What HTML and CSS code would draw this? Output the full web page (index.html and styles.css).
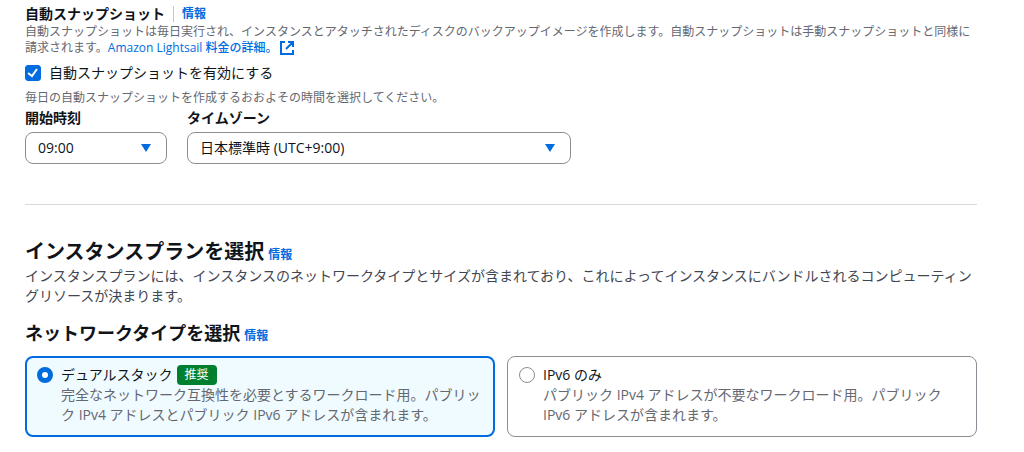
FILE: index.html
```
<!DOCTYPE html>
<html lang="ja">
<head>
    <meta charset="UTF-8">
    <meta name="viewport" content="width=device-width, initial-scale=1.0">
    <title>インスタンスの作成</title>
    <link rel="stylesheet" href="styles.css">
</head>
<body>
    <main class="page">
        <section class="snapshot">
            <div class="snapshot-header">
                <h3 class="snapshot-title">自動スナップショット</h3>
                <a class="info-link divided" href="#">情報</a>
            </div>
            <p class="hint">自動スナップショットは毎日実行され、インスタンスとアタッチされたディスクのバックアップイメージを作成します。自動スナップショットは手動スナップショットと同様に請求されます。<a class="pricing-link" href="#">Amazon Lightsail 料金の詳細。<svg class="external-icon" viewBox="0 0 16 16" aria-hidden="true"><path d="M6 2H2v12h12v-4M9 2h5v5M14 2 7 9"/></svg></a></p>

            <label class="check-row">
                <input class="checkbox" type="checkbox" checked>
                <span>自動スナップショットを有効にする</span>
            </label>

            <p class="hint">毎日の自動スナップショットを作成するおおよその時間を選択してください。</p>

            <div class="fields">
                <div class="field field-time">
                    <label class="field-label" for="start-time">開始時刻</label>
                    <div class="select-box">
                        <select id="start-time">
                            <option>09:00</option>
                        </select>
                        <svg class="caret" viewBox="0 0 12 10" aria-hidden="true"><path d="M1 1h10L6 9z"/></svg>
                    </div>
                </div>
                <div class="field field-zone">
                    <label class="field-label" for="timezone">タイムゾーン</label>
                    <div class="select-box">
                        <select id="timezone">
                            <option>日本標準時 (UTC+9:00)</option>
                        </select>
                        <svg class="caret" viewBox="0 0 12 10" aria-hidden="true"><path d="M1 1h10L6 9z"/></svg>
                    </div>
                </div>
            </div>
        </section>

        <hr class="divider">

        <section class="plan">
            <div class="heading-row">
                <h1>インスタンスプランを選択</h1>
                <a class="info-link" href="#">情報</a>
            </div>
            <p class="lead">インスタンスプランには、インスタンスのネットワークタイプとサイズが含まれており、これによってインスタンスにバンドルされるコンピューティングリソースが決まります。</p>

            <div class="heading-row">
                <h2 id="network-heading">ネットワークタイプを選択</h2>
                <a class="info-link" href="#">情報</a>
            </div>

            <div class="cards" role="radiogroup" aria-labelledby="network-heading">
                <label class="card">
                    <input class="radio" type="radio" name="network" checked>
                    <span class="card-body">
                        <span class="card-title">デュアルスタック <span class="badge">推奨</span></span>
                        <span class="card-text">完全なネットワーク互換性を必要とするワークロード用。パブリック IPv4 アドレスとパブリック IPv6 アドレスが含まれます。</span>
                    </span>
                </label>
                <label class="card">
                    <input class="radio" type="radio" name="network">
                    <span class="card-body">
                        <span class="card-title">IPv6 のみ</span>
                        <span class="card-text">パブリック IPv4 アドレスが不要なワークロード用。パブリック IPv6 アドレスが含まれます。</span>
                    </span>
                </label>
            </div>
        </section>
    </main>
</body>
</html>
```

FILE: styles.css
```
* {
    box-sizing: border-box;
}
body {
    margin: 0;
    background: #fff;
    color: #0f141a;
    font-family: "Open Sans", "Noto Sans CJK JP", sans-serif;
    font-size: 14px;
    line-height: 20px;
}
h1, h2, h3, p {
    margin: 0;
}
a {
    color: #006ce0;
    text-decoration: none;
}
.page {
    padding: 4px 47px 14px 25px;
}

/* Automatic snapshots */
.snapshot-header {
    display: flex;
    align-items: center;
    gap: 8px;
}
.snapshot-title {
    font-size: 14px;
    font-weight: 700;
}
.info-link {
    font-size: 12px;
    font-weight: 700;
    line-height: 16px;
}
.divided {
    border-left: 1px solid #c6c6cd;
    padding-left: 8px;
}
.hint {
    color: #656871;
    font-size: 12px;
    line-height: 16px;
}
.pricing-link {
    font-weight: 500;
}
.external-icon {
    width: 16px;
    height: 16px;
    margin-left: 1px;
    vertical-align: text-bottom;
    fill: none;
    stroke: #006ce0;
    stroke-width: 2;
}
.check-row {
    display: flex;
    align-items: center;
    gap: 8px;
    margin: 7px 0;
}
.checkbox {
    appearance: none;
    width: 16px;
    height: 16px;
    margin: 0;
    border: 1px solid #8c8c94;
    border-radius: 3px;
}
.checkbox:checked {
    border-color: #006ce0;
    background: #006ce0 url("data:image/svg+xml,%3Csvg xmlns='http://www.w3.org/2000/svg' viewBox='0 0 14 14'%3E%3Cpath d='M2 7l4 3 5-7' fill='none' stroke='white' stroke-width='2'/%3E%3C/svg%3E");
}
.fields {
    display: flex;
    gap: 20px;
    margin-top: 2px;
}
.field {
    display: flex;
    flex-direction: column;
    gap: 4px;
}
.field-time {
    width: 142px;
}
.field-zone {
    width: 384px;
}
.field-label {
    font-weight: 700;
}
.select-box {
    display: grid;
    align-items: center;
}
.select-box select,
.caret {
    grid-area: 1 / 1;
}
.select-box select {
    appearance: none;
    width: 100%;
    height: 32px;
    padding: 0 32px 0 12px;
    border: 1px solid #8c8c94;
    border-radius: 8px;
    background: #fff;
    color: #0f141a;
    font: inherit;
}
.caret {
    justify-self: end;
    width: 12px;
    height: 10px;
    margin-right: 15px;
    fill: #006ce0;
    pointer-events: none;
}
.divider {
    margin: 40px 0 35px;
    border: 0;
    border-top: 1px solid #d5dbdb;
}

/* Instance plan */
.heading-row {
    display: flex;
    align-items: baseline;
    gap: 4px;
}
h1 {
    font-size: 20px;
    line-height: 24px;
}
h2 {
    font-size: 18px;
    line-height: 24px;
}
.lead {
    margin: 2px 0 15px;
    color: #424650;
}
.cards {
    display: grid;
    grid-template-columns: 1fr 1fr;
    gap: 12px;
    margin-top: 11px;
}
.card {
    display: flex;
    gap: 8px;
    padding: 8px 11px 11px;
    border: 1px solid #8c8c94;
    border-radius: 8px;
}
.card:has(:checked) {
    padding: 7px 10px 10px;
    border: 2px solid #006ce0;
    background: #f0fbff;
}
.radio {
    appearance: none;
    flex: none;
    width: 16px;
    height: 16px;
    margin: 2px 0 0;
    border: 1px solid #8c8c94;
    border-radius: 50%;
    background: #fff;
}
.radio:checked {
    border: 5px solid #006ce0;
}
.card-title {
    display: flex;
    align-items: center;
    gap: 4px;
}
.card-text {
    display: block;
    color: #656871;
}
.badge {
    padding: 0 8px;
    border-radius: 4px;
    background: #00802f;
    color: #fff;
    font-size: 12px;
}
```
